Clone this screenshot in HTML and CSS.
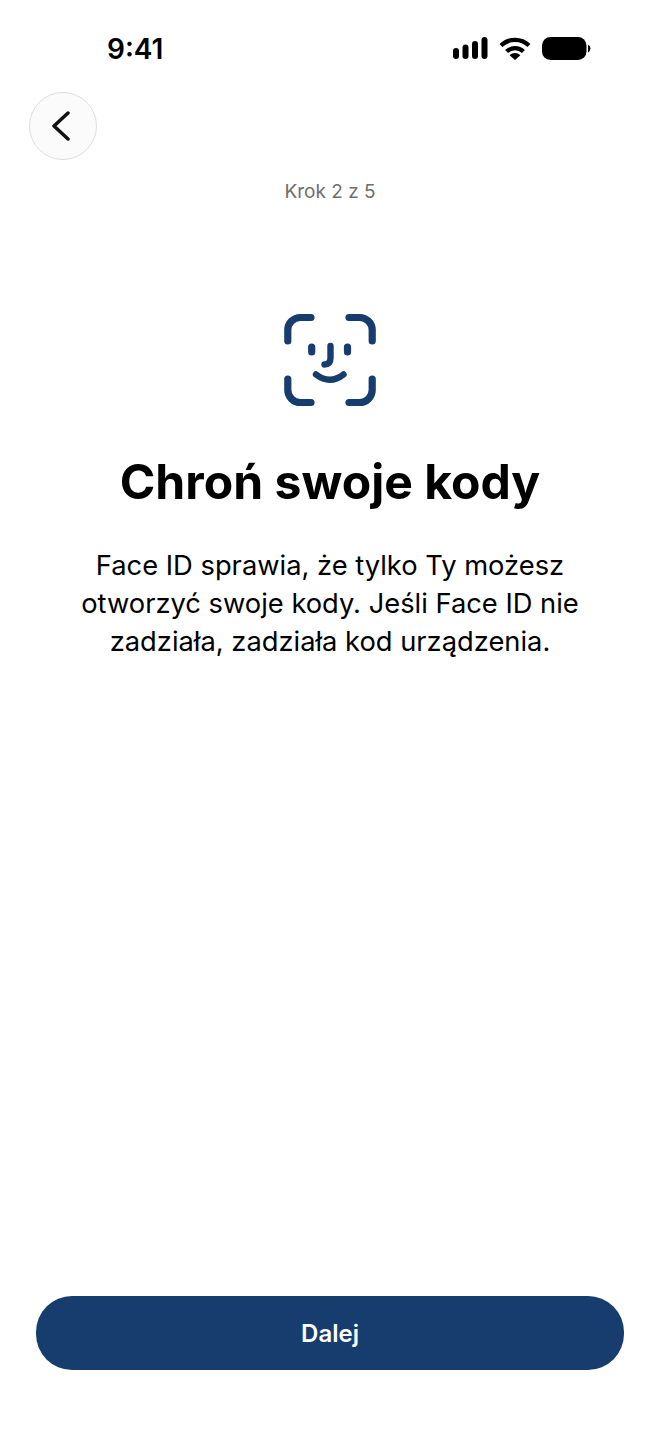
FILE: index.html
```html
<!DOCTYPE html>
<html lang="pl">
<head>
  <meta charset="UTF-8" />
  <title>Chroń swoje kody</title>
  <link rel="stylesheet" href="styles.css">
</head>
<body>

<div class="screen">
  <div class="status-bar">
    <span class="time">9:41</span>
    <div class="status-icons">
      <svg class="signal" width="35" height="23" viewBox="0 0 35 23" fill="#000">
        <rect x="0" y="11" width="6" height="11" rx="3"/>
        <rect x="9.5" y="7.5" width="6" height="14.5" rx="3"/>
        <rect x="19" y="4" width="6" height="18" rx="3"/>
        <rect x="28.5" y="0" width="6" height="22" rx="3"/>
      </svg>
      <svg class="wifi" width="32" height="23" viewBox="0 0 32 23" fill="none" stroke="#000" stroke-width="4.2">
        <path d="M2 8.6 A20 20 0 0 1 30 8.6"/>
        <path d="M7.6 14.6 A12 12 0 0 1 24.4 14.6"/>
        <path d="M10.6 18.2 L16 23 L21.4 18.2 A8 8 0 0 0 10.6 18.2 Z" fill="#000" stroke="none"/>
      </svg>
      <svg class="battery" width="49" height="23" viewBox="0 0 49 23" fill="#000">
        <rect x="0" y="0" width="44.5" height="23" rx="8.5"/>
        <path d="M46 7.5 A4.5 4.5 0 0 1 46 15.5 Z"/>
      </svg>
    </div>
  </div>

  <div class="nav">
    <button class="back-btn" aria-label="Wstecz">
      <svg width="18" height="30" viewBox="0 0 18 30" fill="none" stroke="#111" stroke-width="3.5" stroke-linecap="round" stroke-linejoin="round">
        <path d="M16 2 L2 15 L16 28"/>
      </svg>
    </button>
  </div>

  <div class="step">Krok 2 z 5</div>

  <div class="content">
    <svg class="face-icon" width="120" height="120" viewBox="0 0 120 120" fill="none" stroke="#163d6e" stroke-width="7.2" stroke-linecap="round" stroke-linejoin="round">
      <path d="M17.8 41 V30 A12.5 12.5 0 0 1 30.3 17.5 H41"/>
      <path d="M79 17.5 H89.7 A12.5 12.5 0 0 1 102.2 30 V41"/>
      <path d="M17.8 79 V90 A12.5 12.5 0 0 0 30.3 102.5 H41"/>
      <path d="M79 102.5 H89.7 A12.5 12.5 0 0 0 102.2 90 V79"/>
      <path d="M41.7 47 V52"/>
      <path d="M77.5 47 V52"/>
      <path d="M60.5 46 V58 Q60.5 64.5 54.5 64.5" stroke-width="6.4"/>
      <path d="M46 74.5 Q60 85 73.5 74.5" stroke-width="6.4"/>
    </svg>
    <h1>Chroń swoje kody</h1>
    <p>Face ID sprawia, że tylko Ty możesz<br>otworzyć swoje kody. Jeśli Face ID nie<br>zadziała, zadziała kod urządzenia.</p>
  </div>

  <button class="next-btn">Dalej</button>
</div>

</body>
</html>
```

FILE: styles.css
```css
* { box-sizing: border-box; }
body {
  margin: 0;
  background-color: #fff;
  color: #000;
  font-family: Inter, 'Liberation Sans', sans-serif;
}
.screen {
  width: 660px;
  height: 1434px;
  display: flex;
  flex-direction: column;
  overflow: hidden;
}
.status-bar {
  height: 92px;
  padding: 37px 69px 0 107px;
  display: flex;
  justify-content: space-between;
  align-items: flex-start;
}
.time {
  font-size: 28px;
  font-weight: 600;
  line-height: 24px;
}
.status-icons {
  display: flex;
  gap: 11px;
}
.status-icons svg { display: block; }
.nav {
  padding-left: 29px;
}
.back-btn {
  width: 68px;
  height: 68px;
  padding: 0 4px 0 0;
  border-radius: 50%;
  border: 1px solid #dedede;
  background-color: #fbfbfb;
  display: flex;
  align-items: center;
  justify-content: center;
}
.step {
  margin-top: 20px;
  height: 24px;
  line-height: 24px;
  text-align: center;
  font-size: 19px;
  color: #6e6e6e;
}
.content {
  flex: 1;
  padding-top: 96px;
  display: flex;
  flex-direction: column;
  align-items: center;
  text-align: center;
}
.face-icon { display: block; }
h1 {
  margin: 0;
  padding-top: 34px;
  font-size: 48.1px;
  font-weight: 700;
  line-height: 56px;
}
p {
  margin: 0;
  padding-top: 37px;
  font-size: 27.3px;
  line-height: 38px;
  font-weight: 400;
}
.next-btn {
  margin: 0 36px 64px;
  height: 74px;
  padding-top: 2px;
  border: none;
  border-radius: 36px;
  background-color: #163d6e;
  color: #fff;
  font-family: inherit;
  font-size: 24px;
  font-weight: 600;
}
```
